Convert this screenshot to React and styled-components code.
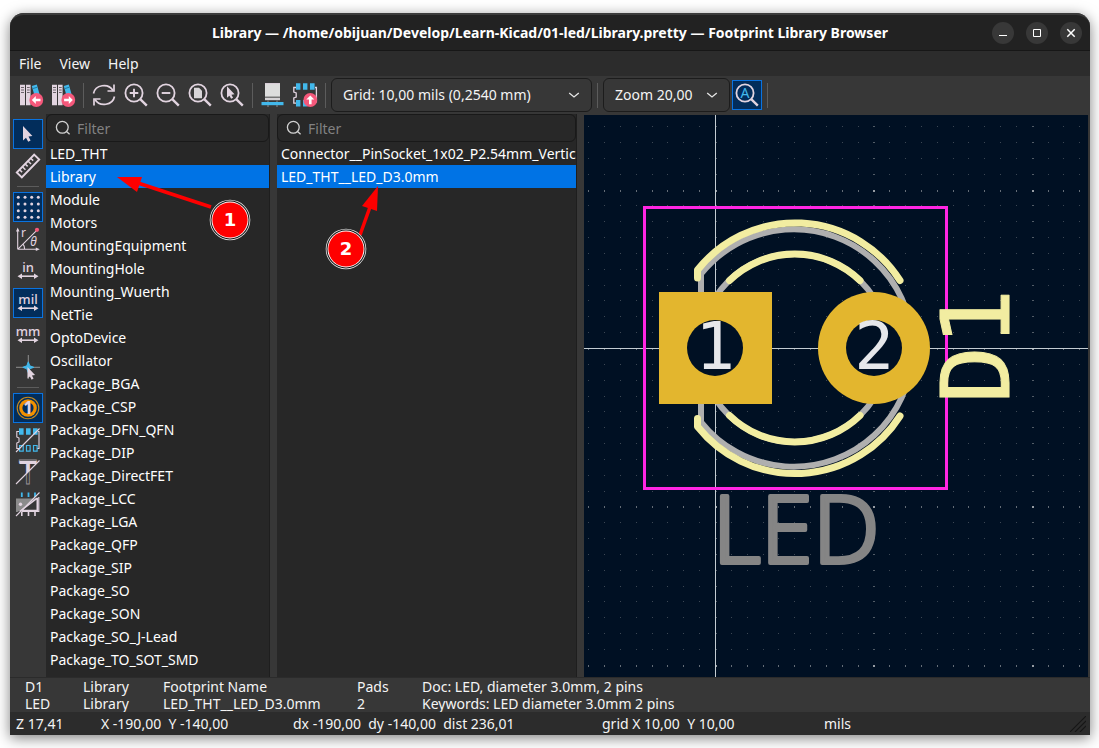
import React, { useState } from "react";
import styled, { createGlobalStyle } from "styled-components";

const ink = "#e2d4e0";
const blue = "#42b8eb";
const pink = "#f5587b";

const GlobalStyle = createGlobalStyle`
  *, *::before, *::after { box-sizing: border-box; }
  body {
    margin: 0;
    background: #fff;
    color: #f4f4f4;
    font-family: "Noto Sans", "Open Sans", sans-serif;
    font-size: 14px;
    line-height: 17px;
  }
  button, input, select { font: inherit; color: inherit; }
`;

const Page = styled.div`
  display: flex;
  height: 100vh;
  padding: 13px 9px 13px 10px;
  overflow: hidden;
`;

const Window = styled.main`
  position: relative;
  flex: 1;
  min-width: 0;
  display: flex;
  flex-direction: column;
  background: #373737;
  border-radius: 14px 14px 0 0;
  box-shadow: 0 3px 14px rgba(0, 0, 0, 0.5);
`;

const TitleBar = styled.header`
  display: grid;
  grid-template-columns: 1fr auto 1fr;
  align-items: center;
  height: 38px;
  padding: 0 8px;
  background: #222;
  border-top: 2px solid #3b3b3b;
  border-bottom: 1px solid #171717;
  border-radius: 14px 14px 0 0;
`;

const Title = styled.h1`
  grid-column: 2;
  margin: 0;
  font-size: 14px;
  font-weight: 700;
  white-space: nowrap;
  color: #fff;
`;

const WindowButtons = styled.div`
  display: flex;
  justify-content: flex-end;
  gap: 12px;
`;

const WindowButton = styled.button`
  display: grid;
  place-items: center;
  width: 22px;
  height: 22px;
  padding: 0;
  border: 0;
  border-radius: 50%;
  background: #383838;
  color: #fff;
`;

const MenuBar = styled.nav`
  display: flex;
  gap: 18px;
  height: 25px;
  padding: 0 9px;
  align-items: center;
  background: #2c2c2c;
`;

const MenuItem = styled.button`
  padding: 0;
  border: 0;
  background: none;
`;

const Toolbar = styled.div`
  display: flex;
  align-items: center;
  gap: 2px;
  height: 38px;
  padding: 0 6px;
`;

const SideBar = styled.div`
  display: flex;
  flex-direction: column;
  align-items: center;
  gap: 2px;
  padding-top: 5px;
`;

const ToolButton = styled.button`
  flex: none;
  display: grid;
  place-items: center;
  width: 30px;
  height: 30px;
  padding: 0;
  border: 1px solid ${(p) => (p.$active ? "#0a73e0" : "transparent")};
  background: ${(p) => (p.$active ? "#022d5b" : "transparent")};

  svg { overflow: visible; }
`;

const Divider = styled.span`
  flex: none;
  background: #5c5c5c;
  ${(p) =>
    p.$horizontal
      ? "width: 22px; height: 1px; margin: 3px 0;"
      : "width: 1px; height: 25px; margin: 0 3px;"}
`;

const SelectBox = styled.div`
  position: relative;
  width: ${(p) => p.$width}px;
  height: 34px;

  select {
    appearance: none;
    width: 100%;
    height: 100%;
    padding: 0 32px 2px 11px;
    border: 1px solid #1c1c1c;
    border-radius: 6px;
    background: #373737;
  }

  svg {
    position: absolute;
    right: 12px;
    top: 11px;
    pointer-events: none;
  }
`;

const Workspace = styled.div`
  flex: 1;
  min-height: 0;
  display: grid;
  grid-template-columns: 36px minmax(0, 1fr);
  border-bottom: 1px solid #2b2b2b;
`;

const Panels = styled.div`
  display: grid;
  grid-template-columns: 224px 300px minmax(0, 1fr);
  gap: 7px;
  min-height: 0;
`;

const ListPanel = styled.section`
  display: flex;
  flex-direction: column;
  min-height: 0;
  min-width: 0;
  background: #272727;
  border-right: 1px solid #1e1e1e;
`;

const FilterField = styled.label`
  display: flex;
  align-items: center;
  gap: 6px;
  flex: none;
  height: 28px;
  padding: 0 8px;
  border: 1px solid #191919;
  border-radius: 6px;
  background: #282828;

  input {
    flex: 1;
    min-width: 0;
    padding: 0;
    border: 0;
    outline: 0;
    background: none;
  }
  input::placeholder { color: #828282; opacity: 1; }
`;

const List = styled.ul`
  flex: 1;
  min-height: 0;
  margin: 0;
  padding: 0;
  overflow: hidden;
  list-style: none;
`;

const Row = styled.li`
  height: 23px;
  padding-left: 4px;
  line-height: 23px;
  white-space: nowrap;
  overflow: hidden;
  color: #fff;
  background: ${(p) => (p.$selected ? "#0073e5" : "transparent")};
`;

const CanvasPanel = styled.section`
  min-height: 0;
  min-width: 0;
  padding: 1px 2px 0 0;
  overflow: hidden;
`;

const Canvas = styled.svg`
  display: block;
  width: 100%;
  height: 100%;
  background: #001023;
`;

const InfoBar = styled.dl`
  display: grid;
  grid-template-columns: 58px 80px 194px 65px 1fr;
  height: 34px;
  margin: 0;
  padding-left: 15px;
  white-space: nowrap;

  dt, dd { margin: 0; }
`;

const StatusBar = styled.footer`
  position: relative;
  display: grid;
  grid-template-columns: 85px 192px 309px 222px 1fr;
  align-items: center;
  height: 23px;
  padding-left: 6px;
  background: #2c2c2c;
  white-space: pre;

  svg { position: absolute; right: 4px; bottom: 3px; }
`;

const Callouts = styled.svg`
  position: absolute;
  left: 0;
  top: 0;
  pointer-events: none;
`;

/* ---------- icons ---------- */

const Icon = ({ children, size = 24 }) => (
  <svg width={size} height={size} viewBox="0 0 24 24" fill="none" aria-hidden="true">
    {children}
  </svg>
);

const Badge = ({ angle, x = 17.3, y = 17 }) => (
  <g transform={`translate(${x} ${y}) rotate(${angle})`}>
    <circle r="6.9" fill={pink} />
    <path d="M-4.5 0L-.5-4V-1.3H4.2V1.3H-.5V4Z" fill="#fff" />
  </g>
);

const Books = ({ angle }) => (
  <Icon>
    <path d="M1 1.8h5v20.4H1zM7 1.8h4.6v20.4H7z" fill={ink} />
    <path d="M2 4.5h3M2 7h3M2 9.5h3M8 4.5h2.7M8 7h2.7M8 9.5h2.7" stroke="#6b646b" />
    <path d="M12.8 3l5-1.5 4.8 17-5 1.5z" fill={blue} />
    <path d="M14 5.5l4-1.2" stroke="#1d7ba6" />
    <Badge angle={angle} />
  </Icon>
);

const Refresh = () => (
  <Icon>
    <g stroke={ink} strokeWidth="1.7">
      <path d="M1.5 10.5A10.5 9.6 0 0 1 21 7.5M22.5 13.5A10.5 9.6 0 0 1 3 16.5" />
      <path d="M22 1.5V8H15.5M2 22.5V16H8.5" />
    </g>
  </Icon>
);

const Lens = ({ children }) => (
  <Icon>
    <circle cx="10" cy="10" r="8.6" stroke={ink} strokeWidth="1.8" />
    <path d="M16.2 16.2l6.6 6.4" stroke={ink} strokeWidth="2.4" />
    {children}
  </Icon>
);

const PartView = () => (
  <Icon>
    <path d="M4 .3h15v13.4H4z" fill="#ddd" />
    <path d="M4 14.6h15v2.6H4z" fill="#d5d2d5" />
    <path d="M4 .7h15" stroke={ink} />
    <path d="M7 17.5v6.5M16 17.5v6.5" stroke="#8e8e8e" />
    <path d="M.5 19h22v3.2H.5z" fill={blue} />
  </Icon>
);

const ChipUp = () => (
  <Icon>
    <path d="M3 4.5H.8V9l2.4 1v4l-2.4 1v5.2H3M22 4.5h1.4v15" stroke={ink} strokeWidth="1.3" />
    <path d="M3 .3h4.4v6.4H3zM10 .3h4.4v6.4H10zM17 .3h4.6v6.4H17zM3 17h4.4v6.6H3zM10 17h4.4v6.6H10z" fill={blue} />
    <Badge angle={90} y={17} />
  </Icon>
);

const Pointer = ({ x = 7, y = 4, scale = 1 }) => (
  <path
    transform={`translate(${x} ${y}) scale(${scale})`}
    d="M0 0V14.4L3 11.8 5.2 15.8 7.6 14.4 5.5 10.6 9.4 10Z"
    fill={ink}
  />
);

const Ruler = () => (
  <Icon>
    <g transform="translate(12 12) rotate(-46)" stroke={ink} strokeWidth="1.9">
      <path d="M-12.5-3.5H12.5V3.5H-12.5Z" />
      <path d="M-8.5-3.5V0M-4.5-3.5V.8M-.5-3.5V0M3.5-3.5V.8M7.5-3.5V0" strokeWidth="1.5" />
    </g>
  </Icon>
);

const DotGrid = () => (
  <Icon>
    {[2.3, 9, 15.7, 22.3].map((y) =>
      [2.3, 9, 15.7, 22.3].map((x) => <circle key={`${x}-${y}`} cx={x} cy={y} r="1.5" fill={ink} />)
    )}
  </Icon>
);

const IconText = styled.text`
  font-family: "Noto Sans", sans-serif;
  font-size: ${(p) => p.$size}px;
  font-weight: ${(p) => p.$weight || 400};
  font-style: ${(p) => (p.$italic ? "italic" : "normal")};
  text-anchor: middle;
`;

const Polar = () => (
  <Icon>
    <path d="M1.7 22.3V3M1.7 22.3H21M1.7 22.3L21 3.2M7 17.2Q8.6 19 8.6 22" stroke={ink} strokeWidth="1.1" />
    <path d="M1.7.5L3.5 4.5H0ZM23.8 22.3L19.8 24V20.5Z" fill={ink} />
    <circle cx="21" cy="2.8" r="2.1" fill={pink} />
    <IconText x="7.5" y="10" $size={12} fill={ink}>r</IconText>
    <IconText x="17.5" y="19" $size={12} $italic fill={ink}>θ</IconText>
  </Icon>
);

const Unit = ({ label }) => (
  <Icon>
    <IconText x="12" y="13" $size={13} $weight={500} fill={ink}>{label}</IconText>
    <path d="M4 17.2H20" stroke={ink} strokeWidth="1.6" />
    <path d="M1.5 17.2L6 14.4V20ZM22.5 17.2L18 14.4V20Z" fill={ink} />
  </Icon>
);

const CrossCursor = () => (
  <Icon>
    <path d="M12.3 0V24M0 12.3H24" stroke="#9a9a9a" strokeWidth=".9" />
    <path d="M12.3 6.8L13.8 10.8 17.8 12.3 13.8 13.8 12.3 17.8 10.8 13.8 6.8 12.3 10.8 10.8Z" fill={blue} stroke={blue} />
    <Pointer x={11.5} y={12} scale={0.8} />
  </Icon>
);

const PadIcon = () => (
  <Icon>
    <circle cx="12" cy="12" r="10.8" stroke="#c98a1b" strokeWidth="1.1" />
    <circle cx="12" cy="12" r="8.8" fill="#f29100" />
    <circle cx="12" cy="12" r="5.6" fill="#022d5b" />
    <IconText x="12" y="18" $size={17} $weight={700} fill={ink}>1</IconText>
  </Icon>
);

const ChipSlash = () => (
  <Icon>
    <path d="M3 3.5H.8V9l2.2 1v4l-2.2 1v5.5H3M22 3.5h1v17h-2" stroke={ink} strokeWidth="1.1" />
    <path d="M3 .3h4.6v6.4H3zM10 .3h4.6v6.4H10zM17 .3h4.6v6.4H17z" fill={blue} />
    <path d="M3.6 17.5h3.6v5.6H3.6zM10.5 17.5h3.6v5.6h-3.6zM17.5 17.5h3.6v5.6h-3.6z" stroke={blue} strokeWidth="1.2" />
    <path d="M0 24L23.5.5" stroke={ink} strokeWidth="1.1" />
  </Icon>
);

const TextSlash = () => (
  <Icon>
    <clipPath id="upperHalf"><path d="M0 0H24L0 24Z" /></clipPath>
    <IconText x="12" y="23.5" $size={32} stroke="#9a959a" strokeWidth=".8">T</IconText>
    <IconText x="12" y="23.5" $size={32} $weight={500} fill={ink} clipPath="url(#upperHalf)">T</IconText>
    <path d="M0 24L23.5.5" stroke={ink} strokeWidth="1.1" />
  </Icon>
);

const PartSlash = () => (
  <Icon>
    <path d="M0 6.5H19L1.5 20H0Z" fill="#8b8b8b" />
    <path d="M5 18.5L20.5 6.5h.8v12z" stroke={ink} strokeWidth="1.6" />
    <path d="M22.8 5v14.5H6" stroke={ink} strokeWidth="1.2" />
    <circle cx="4.5" cy="12.3" r="1.7" fill={ink} />
    <path d="M5.8.5V5M12.5.5V5M19 .5V5" stroke={blue} strokeWidth="1.8" />
    <path d="M5.8 19.5V24M12.5 19.5V24M19 19.5V24" stroke={ink} strokeWidth="1.6" />
    <path d="M0 24L23.5.5" stroke={ink} strokeWidth="1.1" />
  </Icon>
);

const SearchIcon = () => (
  <svg width="16" height="16" viewBox="0 0 16 16" fill="none" stroke="#d2d2d2" strokeWidth="1.3" aria-hidden="true">
    <circle cx="7.3" cy="7.3" r="5.9" />
    <path d="M11.5 11.5L14.6 14.2" />
  </svg>
);

const Chevron = () => (
  <svg width="12" height="12" viewBox="0 0 12 12" fill="none" stroke="#e6e6e6" strokeWidth="1.3" aria-hidden="true">
    <path d="M1.2 4L6 8 10.8 4" />
  </svg>
);

/* ---------- data ---------- */

const libraries = [
  "LED_THT", "Library", "Module", "Motors", "MountingEquipment", "MountingHole",
  "Mounting_Wuerth", "NetTie", "OptoDevice", "Oscillator", "Package_BGA", "Package_CSP",
  "Package_DFN_QFN", "Package_DIP", "Package_DirectFET", "Package_LCC", "Package_LGA",
  "Package_QFP", "Package_SIP", "Package_SO", "Package_SON", "Package_SO_J-Lead",
  "Package_TO_SOT_SMD",
];

const footprints = ["Connector__PinSocket_1x02_P2.54mm_Vertical", "LED_THT__LED_D3.0mm"];

const details = [
  ["D1", "LED"],
  ["Library", "Library"],
  ["Footprint Name", "LED_THT__LED_D3.0mm"],
  ["Pads", "2"],
  ["Doc: LED, diameter 3.0mm, 2 pins", "Keywords: LED diameter 3.0mm 2 pins"],
];

const status = ["Z 17,41", "X -190,00  Y -140,00", "dx -190,00  dy -140,00  dist 236,01", "grid X 10,00  Y 10,00", "mils"];

const mainTools = [
  ["Previous library", <Books angle={0} />],
  ["Next library", <Books angle={180} />],
  null,
  ["Refresh", <Refresh />],
  ["Zoom in", <Lens><path d="M10 5.7V14.3M5.7 10H14.3" stroke={ink} strokeWidth="1.9" /></Lens>],
  ["Zoom out", <Lens><path d="M5.7 10H14.3" stroke={ink} strokeWidth="1.9" /></Lens>],
  ["Zoom to fit", <Lens><path d="M6 4.7H11L14 7.7V15.2H6Z" fill="#d8d5d8" /></Lens>],
  ["Zoom to selection", <Lens><Pointer x={7} y={3.2} scale={0.8} /></Lens>],
  null,
  ["3D viewer", <PartView />],
  ["Insert footprint", <ChipUp />],
  null,
];

const sideTools = [
  ["Select", <Icon><Pointer /></Icon>, true],
  ["Measure", <Ruler />],
  null,
  ["Show grid", <DotGrid />, true],
  ["Polar coordinates", <Polar />],
  ["Inches", <Unit label="in" />],
  ["Mils", <Unit label="mil" />, true],
  ["Millimeters", <Unit label="mm" />],
  ["Full-window crosshair", <CrossCursor />],
  null,
  ["Show pad numbers", <PadIcon />, true],
  ["Sketch pads", <ChipSlash />],
  ["Sketch texts", <TextSlash />],
  ["Sketch outlines", <PartSlash />],
];

/* ---------- parts ---------- */

const Tools = ({ items, horizontal }) =>
  items.map((item, i) =>
    item ? (
      <ToolButton key={i} type="button" aria-label={item[0]} $active={item[2]}>
        {item[1]}
      </ToolButton>
    ) : (
      <Divider key={i} $horizontal={horizontal} />
    )
  );

function FilteredList({ label, names, initial }) {
  const [selected, setSelected] = useState(initial);
  return (
    <ListPanel>
      <FilterField>
        <SearchIcon />
        <input type="text" placeholder="Filter" aria-label={`Filter ${label}`} />
      </FilterField>
      <List role="listbox" aria-label={label}>
        {names.map((name) => (
          <Row
            key={name}
            role="option"
            aria-selected={name === selected}
            $selected={name === selected}
            onClick={() => setSelected(name)}
          >
            {name}
          </Row>
        ))}
      </List>
    </ListPanel>
  );
}

/* Grid dots, one every 10 mils; each tenth column and row is heavier. */
const GRID = 15.84;
const gridPath = (heavyX, heavyY) => {
  let d = "";
  for (let i = -8; i <= 23; i++) {
    for (let j = -14; j <= 20; j++) {
      if ((i % 10 === 0) !== heavyX || (j % 10 === 0) !== heavyY) continue;
      const w = heavyX ? 2 : 1;
      const h = heavyY ? 2 : 1;
      d += `M${Math.round(i * GRID)} ${Math.round(j * GRID)}h${w}v${h}h-${w}z`;
    }
  }
  return d;
};

const BoardText = styled.text`
  font-family: "DejaVu Sans Mono", monospace;
  font-size: ${(p) => p.$size}px;
  text-anchor: middle;
  stroke-linejoin: round;
`;

const ValueText = styled(BoardText)`
  font-family: "Noto Sans", sans-serif;
  font-weight: 300;
  stroke-width: 4;
`;

const FootprintCanvas = () => (
  <Canvas viewBox="-131 -233 504 562" preserveAspectRatio="xMinYMin slice" role="img" aria-label="Footprint preview">
    <path d={gridPath(false, false)} fill="#3c4754" />
    <path d={gridPath(true, false)} fill="#525c67" />
    <path d={gridPath(false, true)} fill="#646d77" />
    <path d={gridPath(true, true)} fill="#969ca3" />
    <path d="M0-233h1v562h-1zM-131 0h504v1h-504z" fill="#c3ccd2" />
    <g fill="none" strokeLinecap="round" strokeLinejoin="round">
      <g stroke="#afafaf" strokeWidth="6">
        <path d="M-14-74A118.7 118.7 0 1 1-14 74Z" />
        <circle cx="79.5" cy="0" r="94" />
      </g>
      <g stroke="#f2eda1" strokeWidth="7">
        <path d="M-17.5-70V-78A124.5 124.5 0 0 1 185-67.5M-17.5 70.5V78.5A124.5 124.5 0 0 0 185 68" />
        <path d="M14.5-67.5A93.7 93.7 0 0 1 145-67.5M14.5 67.5A93.7 93.7 0 0 0 145 67.5" />
      </g>
      <rect x="-70.5" y="-140.5" width="302" height="281" stroke="#ff26e2" strokeWidth="3" strokeLinejoin="miter" />
    </g>
    <rect x="-56" y="-56" width="113" height="112" fill="#e3b62e" />
    <circle cx="159" cy="0" r="56" fill="#e3b62e" />
    <circle r="28" fill="#001023" />
    <circle cx="159" cy="0" r="28" fill="#001023" />
    <BoardText x="0" y="21" $size={66} fill="#e6e7ea">1</BoardText>
    <BoardText x="159" y="21" $size={66} fill="#e6e7ea">2</BoardText>
    <ValueText x="81" y="215" $size={94} fill="#858585" stroke="#858585">LED</ValueText>
    <BoardText transform="translate(294 -2) rotate(-90)" $size={95} fill="#f2eda1" stroke="#f2eda1">D1</BoardText>
  </Canvas>
);

const CalloutText = styled.text`
  font-family: "DejaVu Sans", sans-serif;
  font-size: 18px;
  font-weight: 700;
  text-anchor: middle;
  fill: #fff;
`;

const Callout = ({ x, y, children }) => (
  <g transform={`translate(${x} ${y})`}>
    <circle r="20.3" fill="#e8e8e8" />
    <circle r="19.5" fill="#161616" />
    <circle r="18.5" fill="#fff" />
    <circle r="17.6" fill="#fe0000" />
    <CalloutText y="6">{children}</CalloutText>
  </g>
);

export default function App() {
  return (
    <>
      <GlobalStyle />
      <Page>
        <Window>
          <TitleBar>
            <Title>Library — /home/obijuan/Develop/Learn-Kicad/01-led/Library.pretty — Footprint Library Browser</Title>
            <WindowButtons>
              <WindowButton type="button" aria-label="Minimize">
                <svg width="10" height="10" viewBox="0 0 10 10"><path d="M1 7.5H9" stroke="#fff" /></svg>
              </WindowButton>
              <WindowButton type="button" aria-label="Maximize">
                <svg width="10" height="10" viewBox="0 0 10 10"><path d="M1.5 1.5H8.5V8.5H1.5Z" stroke="#fff" fill="none" /></svg>
              </WindowButton>
              <WindowButton type="button" aria-label="Close">
                <svg width="10" height="10" viewBox="0 0 10 10"><path d="M1.3 1.3L8.7 8.7M8.7 1.3L1.3 8.7" stroke="#fff" strokeWidth="1.5" /></svg>
              </WindowButton>
            </WindowButtons>
          </TitleBar>
          <MenuBar>
            <MenuItem type="button">File</MenuItem>
            <MenuItem type="button">View</MenuItem>
            <MenuItem type="button">Help</MenuItem>
          </MenuBar>
          <Toolbar>
            <Tools items={mainTools} />
            <SelectBox $width={261}>
              <select aria-label="Grid"><option>Grid: 10,00 mils (0,2540 mm)</option></select>
              <Chevron />
            </SelectBox>
            <Divider />
            <SelectBox $width={127}>
              <select aria-label="Zoom"><option>Zoom 20,00</option></select>
              <Chevron />
            </SelectBox>
            <ToolButton type="button" aria-label="Automatic zoom" $active>
              <Lens><IconText x="10" y="15" $size={14} fill={blue}>A</IconText></Lens>
            </ToolButton>
            <Divider />
          </Toolbar>
          <Workspace>
            <SideBar><Tools items={sideTools} horizontal /></SideBar>
            <Panels>
              <FilteredList label="libraries" names={libraries} initial="Library" />
              <FilteredList label="footprints" names={footprints} initial="LED_THT__LED_D3.0mm" />
              <CanvasPanel><FootprintCanvas /></CanvasPanel>
            </Panels>
          </Workspace>
          <InfoBar>
            {details.map(([head, value]) => (
              <div key={head}>
                <dt>{head}</dt>
                <dd>{value}</dd>
              </div>
            ))}
          </InfoBar>
          <StatusBar>
            {status.map((s) => <span key={s}>{s}</span>)}
            <svg width="16" height="16" viewBox="0 0 16 16" stroke="#161616" strokeWidth="1.1" aria-hidden="true">
              <path d="M0 16L16 0M5 16L16 5M10 16L16 10" />
            </svg>
          </StatusBar>
          <Callouts width="380" height="270" viewBox="0 0 380 270" aria-hidden="true">
            <g fill="#fe0000" stroke="#fe0000">
              <path d="M128 170L201 194" strokeWidth="3.5" />
              <path d="M107 164L132 164 127 179Z" stroke="none" />
              <path d="M360 194L350 222" strokeWidth="3.5" />
              <path d="M368 173L352 193 367 198Z" stroke="none" />
            </g>
            <Callout x={220} y={207}>1</Callout>
            <Callout x={336} y={236}>2</Callout>
          </Callouts>
        </Window>
      </Page>
    </>
  );
}
